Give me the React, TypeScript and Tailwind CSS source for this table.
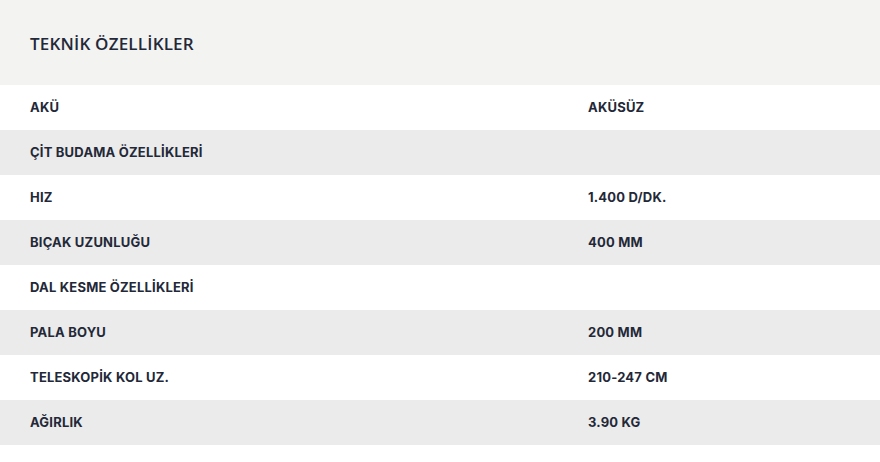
import React from "react";

const rows: { label: string; value: string }[] = [
  { label: "AKÜ", value: "AKÜSÜZ" },
  { label: "ÇİT BUDAMA ÖZELLİKLERİ", value: "" },
  { label: "HIZ", value: "1.400 D/DK." },
  { label: "BIÇAK UZUNLUĞU", value: "400 MM" },
  { label: "DAL KESME ÖZELLİKLERİ", value: "" },
  { label: "PALA BOYU", value: "200 MM" },
  { label: "TELESKOPİK KOL UZ.", value: "210-247 CM" },
  { label: "AĞIRLIK", value: "3.90 KG" },
];

export default function App() {
  return (
    <div className="w-[880px] h-[462px] bg-white text-[#232838]" style={{ fontFamily: "Inter, 'Noto Sans', sans-serif" }}>
      <div className="h-[85px] bg-[#f3f3f2] flex items-center px-[30px] pt-[2px]">
        <h2 className="text-[17px] font-semibold tracking-[0.2px]" style={{ fontFamily: "'Open Sans', sans-serif" }}>
          TEKNİK ÖZELLİKLER
        </h2>
      </div>
      <div className="flex flex-col">
        {rows.map((r, i) => (
          <div
            key={r.label}
            className={`grid grid-cols-[558px_1fr] h-[45px] items-center text-[13px] font-bold tracking-[0.2px] ${i % 2 === 1 ? "bg-[#ebebeb]" : "bg-white"}`}
          >
            <div className="px-[30px]">{r.label}</div>
            <div className="px-[30px]">{r.value}</div>
          </div>
        ))}
      </div>
    </div>
  );
}
